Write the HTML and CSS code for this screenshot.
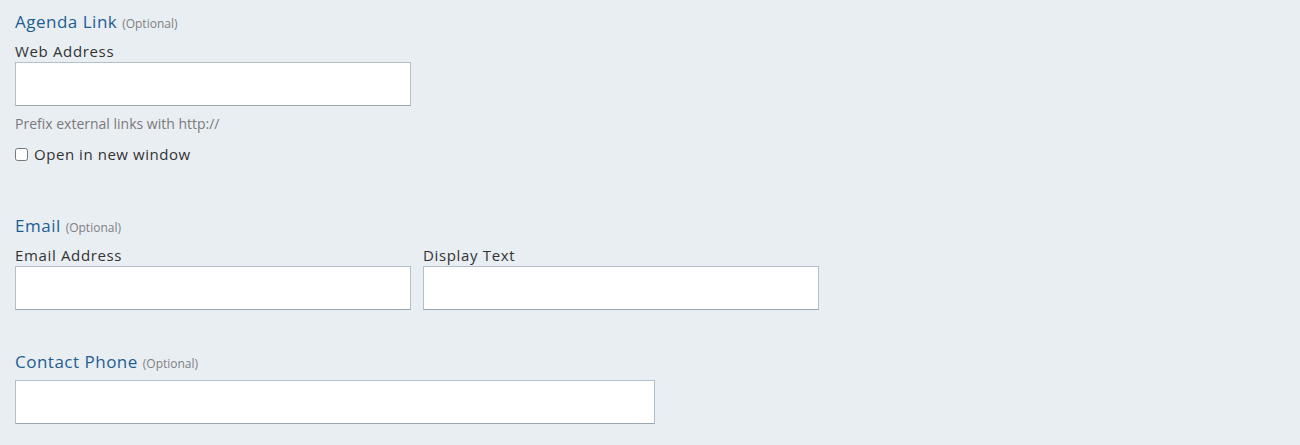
FILE: index.html
```html
<!DOCTYPE html>
<html>
<head>
<meta charset="utf-8">
<link rel="stylesheet" href="styles.css">
</head>
<body>
<form class="form">
  <section class="section section-agenda">
    <h3 class="section-title">Agenda Link <span class="optional">(Optional)</span></h3>
    <div class="field">
      <label class="label">Web Address</label>
      <input class="input input-half" type="text">
      <div class="help">Prefix external links with http://</div>
    </div>
    <label class="check"><input type="checkbox" class="checkbox"> Open in new window</label>
  </section>
  <section class="section section-email">
    <h3 class="section-title">Email <span class="optional">(Optional)</span></h3>
    <div class="row">
      <div class="field">
        <label class="label">Email Address</label>
        <input class="input input-half" type="text">
      </div>
      <div class="field">
        <label class="label">Display Text</label>
        <input class="input input-half" type="text">
      </div>
    </div>
  </section>
  <section class="section section-phone">
    <h3 class="section-title title-tight">Contact Phone <span class="optional">(Optional)</span></h3>
    <input class="input input-wide" type="text">
  </section>
</form>
</body>
</html>
```
FILE: styles.css
```css
html, body {
  margin: 0;
  padding: 0;
  background: #e9eef3;
}
body {
  font-family: "Open Sans", Lato, sans-serif;
  color: #333;
}
.form {
  padding: 10px 15px 0;
  display: flex;
  flex-direction: column;
}
.section {
  display: flex;
  flex-direction: column;
}
.section-email {
  margin-top: 50px;
}
.section-phone {
  margin-top: 40px;
}
.section-title {
  margin: 0;
  font-size: 17px;
  font-weight: 400;
  line-height: 24px;
  letter-spacing: 0.5px;
  color: #1e5e92;
}
.optional {
  font-size: 12px;
  letter-spacing: 0;
  color: #808080;
}
.title-tight {
  margin-bottom: 4px;
}
.field {
  display: flex;
  flex-direction: column;
}
.label {
  font-size: 15px;
  line-height: 20px;
  margin-top: 5px;
  margin-bottom: 1px;
  letter-spacing: 0.65px;
  color: #333;
}
.input {
  box-sizing: border-box;
  height: 44px;
  margin: 0;
  background: #fff;
  border: 1px solid #b3bfcc;
  border-bottom-color: #98a6b3;
  border-radius: 0;
  font: inherit;
  padding: 6px 10px;
}
.input-half {
  width: 396px;
}
.input-wide {
  width: 640px;
}
.help {
  font-size: 14px;
  line-height: 20px;
  margin-top: 8px;
  color: #7a7a7a;
}
.check {
  display: flex;
  align-items: center;
  gap: 6px;
  font-size: 15px;
  line-height: 20px;
  margin-top: 10px;
  letter-spacing: 0.55px;
  color: #333;
}
.checkbox {
  margin: 0;
  width: 13px;
  height: 13px;
}
.row {
  display: flex;
  gap: 12px;
}
```
